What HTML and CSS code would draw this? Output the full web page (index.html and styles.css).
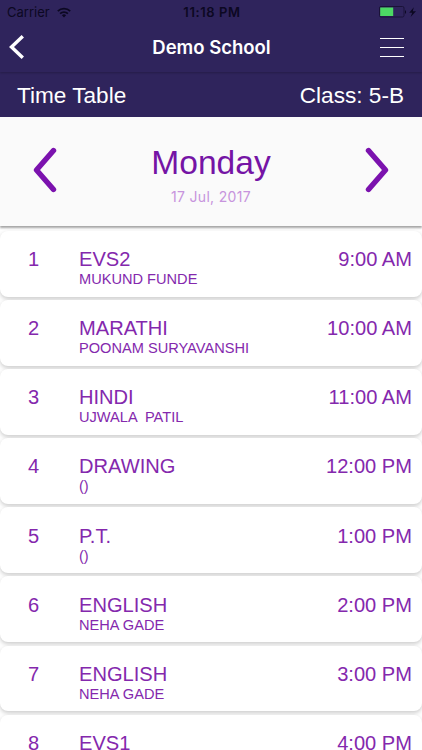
FILE: index.html
```
<!DOCTYPE html>
<html lang="en">
<head>
    <meta charset="UTF-8">
    <meta name="viewport" content="width=device-width, initial-scale=1.0">
    <title>Time Table</title>
    <link rel="stylesheet" href="styles.css">
</head>
<body>
    <div class="header">
        <div class="status-bar">
            <div class="carrier">
                <span class="carrier-name">Carrier</span>
                <svg class="wifi" width="14" height="11" viewBox="0 0 14 11" fill="none" stroke="#0c0822" stroke-width="1.8">
                    <path d="M0.8 4.2a8.8 8.8 0 0 1 12.4 0M3.1 6.7a5.5 5.5 0 0 1 7.8 0"/>
                    <path d="M7 10.4L4.9 8.3a3 3 0 0 1 4.2 0z" fill="#0c0822" stroke="none"/>
                </svg>
            </div>
            <div class="clock">11:18 PM</div>
            <div class="power">
                <svg width="38" height="12" viewBox="0 0 38 12">
                    <rect x="0.5" y="0.5" width="24.5" height="10.5" rx="1.5" fill="none" stroke="#1a1238"/>
                    <rect x="1.2" y="1.5" width="13" height="8.5" fill="#4cd964"/>
                    <path d="M26 4q2.2 1.8 0 4z" fill="#0c0822"/>
                    <path d="M34.8 1.2L30.2 6.8h3L31.6 11 37 5.2h-3.2z" fill="#0c0822"/>
                </svg>
            </div>
        </div>
        <div class="nav-bar">
            <svg class="back" width="16" height="24" viewBox="0 0 16 24" fill="none" stroke="#fff" stroke-width="3.4">
                <path d="M13.8 1.3L2.5 12l11.3 10.7"/>
            </svg>
            <div class="school">Demo School</div>
            <svg class="menu" width="24" height="20" viewBox="0 0 24 20" fill="none" stroke="#fff" stroke-width="1.1">
                <path d="M0 1.5h24M0 10.5h24M0 19.5h24"/>
            </svg>
        </div>
    </div>
    <div class="title-bar">
        <div>Time Table</div>
        <div>Class: 5-B</div>
    </div>
    <div class="day-picker">
        <svg width="24" height="46" viewBox="0 0 24 46" fill="none" stroke="#7b12ae" stroke-width="5.4" stroke-linecap="round" stroke-linejoin="round">
            <path d="M20.5 3.5L3.5 23l17 19.5"/>
        </svg>
        <div class="day">
            <div class="day-name">Monday</div>
            <div class="day-date">17 Jul, 2017</div>
        </div>
        <svg width="24" height="46" viewBox="0 0 24 46" fill="none" stroke="#7b12ae" stroke-width="5.4" stroke-linecap="round" stroke-linejoin="round">
            <path d="M3.5 3.5l17 19.5-17 19.5"/>
        </svg>
    </div>
    <div class="periods">
        <div class="period">
            <div class="number">1</div>
            <div class="lesson">
                <div class="subject">EVS2</div>
                <div class="teacher">MUKUND FUNDE</div>
            </div>
            <div class="time">9:00 AM</div>
        </div>
        <div class="period">
            <div class="number">2</div>
            <div class="lesson">
                <div class="subject">MARATHI</div>
                <div class="teacher">POONAM SURYAVANSHI</div>
            </div>
            <div class="time">10:00 AM</div>
        </div>
        <div class="period">
            <div class="number">3</div>
            <div class="lesson">
                <div class="subject">HINDI</div>
                <div class="teacher">UJWALA  PATIL</div>
            </div>
            <div class="time">11:00 AM</div>
        </div>
        <div class="period">
            <div class="number">4</div>
            <div class="lesson">
                <div class="subject">DRAWING</div>
                <div class="teacher">()</div>
            </div>
            <div class="time">12:00 PM</div>
        </div>
        <div class="period">
            <div class="number">5</div>
            <div class="lesson">
                <div class="subject">P.T.</div>
                <div class="teacher">()</div>
            </div>
            <div class="time">1:00 PM</div>
        </div>
        <div class="period">
            <div class="number">6</div>
            <div class="lesson">
                <div class="subject">ENGLISH</div>
                <div class="teacher">NEHA GADE</div>
            </div>
            <div class="time">2:00 PM</div>
        </div>
        <div class="period">
            <div class="number">7</div>
            <div class="lesson">
                <div class="subject">ENGLISH</div>
                <div class="teacher">NEHA GADE</div>
            </div>
            <div class="time">3:00 PM</div>
        </div>
        <div class="period">
            <div class="number">8</div>
            <div class="lesson">
                <div class="subject">EVS1</div>
            </div>
            <div class="time">4:00 PM</div>
        </div>
    </div>
</body>
</html>
```
FILE: styles.css
```
* {
    box-sizing: border-box;
}
body {
    display: flex;
    flex-direction: column;
    height: 750px;
    margin: 0;
    overflow: hidden;
    background-color: #fefefe;
    font-family: "Liberation Sans", Arial, sans-serif;
}
svg {
    display: block;
    flex: none;
}
.header {
    position: relative;
    z-index: 1;
    flex: none;
    height: 72px;
    background-color: #2f245c;
    box-shadow: 0 1px 2px rgba(0, 0, 0, 0.22);
    font-family: Inter, sans-serif;
}
.status-bar {
    display: grid;
    grid-template-columns: 1fr auto 1fr;
    align-items: center;
    height: 24px;
    padding: 0 5px 0 7px;
    color: #0c0822;
    font-size: 13px;
}
.carrier {
    display: flex;
    align-items: center;
    gap: 7px;
}
.clock {
    font-weight: 600;
    letter-spacing: 0.6px;
}
.power {
    display: flex;
    justify-content: flex-end;
}
.nav-bar {
    display: grid;
    grid-template-columns: 1fr auto 1fr;
    align-items: center;
    height: 46px;
    padding: 0 18px 0 9px;
}
.school {
    margin: 0 -5px 0 5px;
    color: #fff;
    font-size: 18.5px;
    font-weight: 600;
}
.menu {
    justify-self: end;
}
/* Title and class name */
.title-bar {
    display: flex;
    flex: none;
    justify-content: space-between;
    height: 45px;
    padding: 0 18px 0 17px;
    background-color: #2f245c;
    color: #fff;
    font-size: 22.6px;
    line-height: 47px;
}
/* Day switcher */
.day-picker {
    position: relative;
    z-index: 1;
    display: flex;
    flex: none;
    justify-content: space-between;
    height: 109px;
    padding: 30px 33px 0;
    background-color: #fafafa;
    box-shadow: 0 2px 2px rgba(0, 0, 0, 0.35);
}
.day {
    text-align: center;
}
.day-name {
    color: #7514a5;
    font-size: 33.6px;
    line-height: 32px;
}
.day-date {
    margin-top: 10px;
    color: #c794dd;
    font-family: Inter, sans-serif;
    font-size: 14px;
    letter-spacing: 0.3px;
    line-height: 16px;
}
/* List of lessons */
.periods {
    padding-top: 5px;
}
.period {
    display: flex;
    height: 65.5px;
    margin-bottom: 3.6px;
    padding: 16.2px 10px 0 28px;
    background-color: #fff;
    border-radius: 8px;
    box-shadow: 0 2px 4px rgba(0, 0, 0, 0.2);
    color: #8428ad;
    font-size: 20.1px;
    line-height: 24px;
}
.number {
    width: 51px;
}
.lesson {
    flex: 1;
}
.teacher {
    font-size: 14.6px;
    line-height: 16px;
    white-space: pre;
}
```
